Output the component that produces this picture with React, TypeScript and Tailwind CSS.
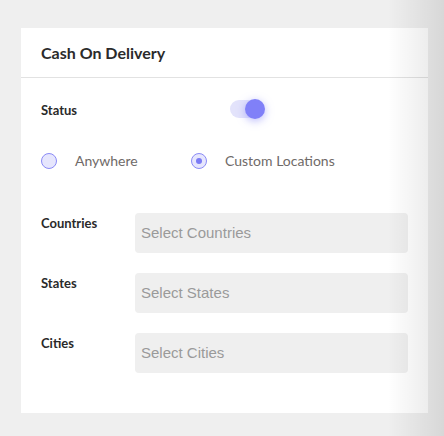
import React from "react";

function Radio({ checked, label, className }: { checked?: boolean; label: string; className?: string }) {
  return (
    <div className={"flex items-center " + (className ?? "")}>
      <span className="flex h-4 w-4 items-center justify-center rounded-full border border-[#8a8af6] bg-[#e6e6fd]">
        {checked && <span className="h-[6px] w-[6px] rounded-full bg-[#7b7bf5]" />}
      </span>
      <span className="ml-[18px] text-[14px] leading-5 text-[#6f6a68]">{label}</span>
    </div>
  );
}

function Field({ label, placeholder }: { label: string; placeholder: string }) {
  return (
    <div className="flex items-start">
      <div className="w-[94px] pt-[2px] text-[13px] font-bold leading-4 text-[#2a2a2a]">{label}</div>
      <div className="flex h-10 flex-1 items-center rounded-[4px] bg-[#efefef] px-[6px] font-['Liberation_Sans',Arial,sans-serif] text-[15px] text-[#9a9a9a]">
        {placeholder}
      </div>
    </div>
  );
}

export default function App() {
  return (
    <div className="relative min-h-[436px] w-full overflow-hidden bg-[#efefef] pb-6 pl-[21px] pr-4 pt-7 font-['Lato','Open_Sans',sans-serif]">
      <div className="bg-white">
        <div className="flex h-[50px] items-center border-b border-[#e2e2e2] px-5">
          <h2 className="pt-[1px] text-[16px] font-bold text-[#2b2b2b]">Cash On Delivery</h2>
        </div>
        <div className="px-5 pb-[40px] pt-[21px]">
          <div className="flex h-5 items-center">
            <div className="w-[189px] pt-[1px] text-[13px] font-bold leading-4 text-[#2a2a2a]">Status</div>
            <div className="relative h-5 w-[35px]">
              <div className="absolute left-0 top-[1px] h-[18px] w-[32px] rounded-full bg-[#e3e3fb]" />
              <div className="absolute left-[15px] top-0 h-5 w-5 rounded-full bg-[#8080f8] shadow-[0_2px_8px_rgba(128,128,248,0.55)]" />
            </div>
          </div>
          <div className="mt-[32px] flex h-5 items-center">
            <Radio label="Anywhere" className="w-[150px]" />
            <Radio label="Custom Locations" checked />
          </div>
          <div className="mt-[42px] flex flex-col gap-5">
            <Field label="Countries" placeholder="Select Countries" />
            <Field label="States" placeholder="Select States" />
            <Field label="Cities" placeholder="Select Cities" />
          </div>
        </div>
      </div>
      <div className="pointer-events-none absolute right-0 top-0 h-full w-[56px] bg-gradient-to-r from-transparent to-black/10" />
    </div>
  );
}
